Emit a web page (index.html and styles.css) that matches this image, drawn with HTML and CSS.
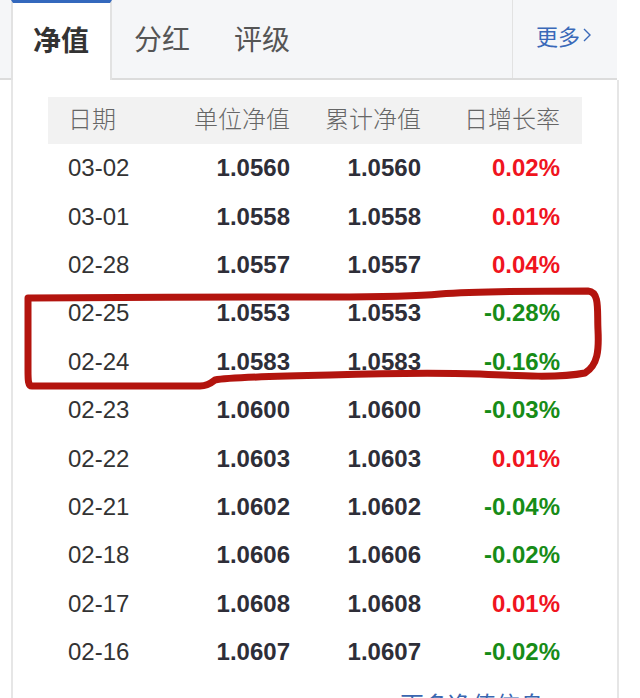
FILE: index.html
```html
<!DOCTYPE html>
<html lang="zh-CN">
<head>
    <meta charset="UTF-8">
    <title>净值</title>
    <link rel="stylesheet" href="styles.css">
</head>
<body>

<div class="fund-box">
    <div class="tabs">
        <span class="tab active">净值</span>
        <span class="tab">分红</span>
        <span class="tab">评级</span>
        <a class="more" href="#">更多<svg class="chevron" width="10" height="16" viewBox="0 0 10 16"><polyline points="2,2 8,8 2,14" fill="none" stroke="currentColor" stroke-width="1.4"/></svg></a>
    </div>

    <div class="panel">
        <div class="nav-table">
            <div class="row head">
                <span>日期</span>
                <span>单位净值</span>
                <span>累计净值</span>
                <span>日增长率</span>
            </div>
            <div class="row"><span>03-02</span><b>1.0560</b><b>1.0560</b><em class="up">0.02%</em></div>
            <div class="row"><span>03-01</span><b>1.0558</b><b>1.0558</b><em class="up">0.01%</em></div>
            <div class="row"><span>02-28</span><b>1.0557</b><b>1.0557</b><em class="up">0.04%</em></div>
            <div class="row"><span>02-25</span><b>1.0553</b><b>1.0553</b><em class="down">-0.28%</em></div>
            <div class="row"><span>02-24</span><b>1.0583</b><b>1.0583</b><em class="down">-0.16%</em></div>
            <div class="row"><span>02-23</span><b>1.0600</b><b>1.0600</b><em class="down">-0.03%</em></div>
            <div class="row"><span>02-22</span><b>1.0603</b><b>1.0603</b><em class="up">0.01%</em></div>
            <div class="row"><span>02-21</span><b>1.0602</b><b>1.0602</b><em class="down">-0.04%</em></div>
            <div class="row"><span>02-18</span><b>1.0606</b><b>1.0606</b><em class="down">-0.02%</em></div>
            <div class="row"><span>02-17</span><b>1.0608</b><b>1.0608</b><em class="up">0.01%</em></div>
            <div class="row"><span>02-16</span><b>1.0607</b><b>1.0607</b><em class="down">-0.02%</em></div>
        </div>
        <div class="more-nav"><a href="#">更多净值信息</a></div>
    </div>
</div>

<!-- hand-drawn marker around two rows -->
<svg class="marker" width="640" height="698" viewBox="0 0 640 698">
    <path d="M30,298 C120,297 250,297 330,297 C380,297 420,296 440,294 C480,291 540,291 588,291 C600,292 597,310 598,330 C599,350 598,365 585,373 C560,378 520,376 480,374 C420,372 360,374 330,375 C280,376 230,377 215,380 C210,384 205,386 200,386 L32,386 C28,386 28,380 28,370 L28,298 Z" fill="none" stroke="#b3140e" stroke-width="7" stroke-linejoin="round"/>
</svg>

</body>
</html>
```

FILE: styles.css
```css
body {
    margin: 0;
    background: #fff;
    font-family: "Liberation Sans", "Noto Sans CJK SC", sans-serif;
    color: #333;
    overflow: hidden;
}

.fund-box {
    width: 619px;
    height: 698px;
    display: flex;
    flex-direction: column;
}

.tabs {
    display: flex;
    height: 78px;
    width: 617px;
    background: #f5f6f8;
    border-bottom: 2px solid #dcdcdc;
}

.tab {
    display: flex;
    align-items: center;
    padding: 0 22px 3px;
    font-size: 28px;
    color: #555;
}

.tab.active {
    box-sizing: border-box;
    height: 80px;
    margin: 0 0 -2px 11px;
    background: #fff;
    border-top: 3px solid #3468bd;
    border-left: 2px solid #e2e2e2;
    border-right: 2px solid #e2e2e2;
    padding: 0 21px 5px 20px;
    font-weight: bold;
    color: #333;
}

.more {
    margin-left: auto;
    width: 81px;
    padding: 0 0 8px 23px;
    border-left: 1px solid #e2e2e2;
    display: flex;
    align-items: center;
    font-size: 22px;
    color: #3a69b8;
    text-decoration: none;
}

.chevron {
    margin-left: 2px;
}

.panel {
    flex: 1;
    margin-left: 11px;
    border-left: 2px solid #e6e6e6;
    border-right: 2px solid #e6e6e6;
}

.nav-table {
    width: 534px;
    margin: 17px 0 0 35px;
}

.row {
    display: grid;
    grid-template-columns: 91px 131px 131px 139px;
    padding: 0 22px 0 20px;
    height: 48.4px;
    align-items: center;
    font-size: 24px;
}

.row > :not(:first-child) {
    text-align: right;
}

.row.head {
    box-sizing: border-box;
    height: 47px;
    padding-bottom: 6px;
    background: #f2f2f2;
    color: #666;
    font-weight: 300;
}

.row b {
    color: #2e2e38;
}

.row em {
    font-style: normal;
    font-weight: bold;
}

.up {
    color: #f0141e;
}

.down {
    color: #178c17;
}

.more-nav {
    width: 534px;
    margin-left: 35px;
    height: 48px;
    display: flex;
    align-items: center;
    font-size: 24px;
}

.more-nav a {
    margin: 6px 0 0 352px;
    color: #3a66b0;
    text-decoration: none;
}

.marker {
    position: absolute;
    left: 0;
    top: 0;
    pointer-events: none;
}
```
